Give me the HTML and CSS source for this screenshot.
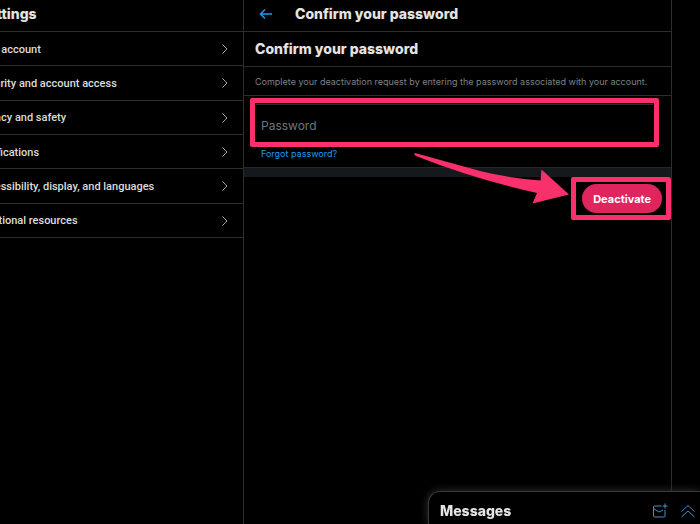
FILE: index.html
```html
<!DOCTYPE html>
<html lang="en">
<head>
<meta charset="utf-8">
<title>Confirm your password</title>
<link rel="stylesheet" href="styles.css">
</head>
<body>
<div class="app">
  <aside class="sidebar">
    <h2 class="bar">Settings</h2>
    <nav class="menu">
      <a href="#">Your account<svg viewBox="0 0 8 12"><path d="M1.5 1.5 6 6 1.5 10.500"/></svg></a>
      <a href="#">Security and account access<svg viewBox="0 0 8 12"><path d="M1.5 1.5 6 6 1.5 10.500"/></svg></a>
      <a href="#">Privacy and safety<svg viewBox="0 0 8 12"><path d="M1.5 1.5 6 6 1.5 10.500"/></svg></a>
      <a href="#">Notifications<svg viewBox="0 0 8 12"><path d="M1.5 1.5 6 6 1.5 10.500"/></svg></a>
      <a href="#">Accessibility, display, and languages<svg viewBox="0 0 8 12"><path d="M1.5 1.5 6 6 1.5 10.500"/></svg></a>
      <a href="#">Additional resources<svg viewBox="0 0 8 12"><path d="M1.5 1.5 6 6 1.5 10.500"/></svg></a>
    </nav>
  </aside>
  <main class="content">
    <header class="bar top">
      <a class="back" href="#" aria-label="Back"><svg viewBox="0 0 14 12"><path d="M6 1.500 1.500 6 6 10.500M1.500 6H13"/></svg></a>
      <h1>Confirm your password</h1>
    </header>
    <h2 class="section-title">Confirm your password</h2>
    <p class="note">Complete your deactivation request by entering the password associated with your account.</p>
    <form>
      <div class="field">
        <input type="password" placeholder="Password" aria-label="Password">
        <div class="mark"></div>
      </div>
      <a class="forgot" href="#">Forgot password?</a>
      <div class="band"></div>
      <div class="actions">
        <div class="confirm">
          <button type="button">Deactivate</button>
          <div class="mark"></div>
        </div>
      </div>
    </form>
    <svg class="arrow" viewBox="0 0 156 52"><path d="M1 1Q-.5 2.500 2 4Q60 27 123 41L118.500 51.500 155 42.500 127.500 17.500 126.500 28.500Q95 26 68 19.500Z"/></svg>
  </main>
</div>
<section class="messages">
  <h2>Messages</h2>
  <button type="button" aria-label="New message"><svg width="16" height="16" viewBox="0 0 16 16"><path d="M9.500 3H2.500Q1.500 3 1.500 4V13Q1.500 14 2.500 14H12Q13 14 13 13V7M1.500 5.500 7 9 11 7M13 .5V5.500M10.500 3H15.500"/></svg></button>
  <button type="button" aria-label="Expand"><svg width="16" height="16" viewBox="0 0 16 16"><path d="M1.500 8.500 8 2.500 14.500 8.500M1.500 14 8 8 14.500 14"/></svg></button>
</section>
</body>
</html>
```
FILE: styles.css
```css
* { box-sizing: border-box; }
body {
  margin: 0;
  background: #000;
  color: #e4e4e4;
  font-family: Inter, "Liberation Sans", sans-serif;
  font-size: 9px;
  overflow: hidden;
}
h1, h2, p { margin: 0; }
h1, h2 { font-size: 14px; line-height: 20px; font-weight: 800; }
a { text-decoration: none; }
svg { fill: none; stroke: currentColor; display: block; }
.app {
  display: grid;
  grid-template-columns: 243px minmax(0, 1fr);
  padding-right: 28px;
  min-height: 100vh;
}
.sidebar { margin-left: -24px; }
.bar {
  height: 32px;
  padding: 4px 0 8px 3px;
  border-bottom: 1px solid #2b2d2f;
}
.menu { display: grid; grid-auto-rows: 1fr; height: 206px; }
.menu a {
  display: flex;
  align-items: center;
  justify-content: space-between;
  padding: 1px 14px 0 0;
  color: #dcdcdc;
  font: 500 11px Roboto, sans-serif;
  border-bottom: 1px solid #2b2d2f;
}
.menu svg { width: 8px; height: 12px; color: #a0a3a6; }
.content {
  position: relative;
  border: 1px solid #2b2d2f;
  border-width: 0 1px;
}
.top { display: flex; align-items: center; gap: 22px; padding-left: 15px; }
.back { color: #1d9bf0; }
.back svg { width: 14px; height: 12px; stroke-width: 1.500; }
.section-title {
  padding: 7px 11px;
  border-bottom: 1px solid #2b2d2f;
}
.note {
  padding: 7px 11px 6px;
  line-height: 15px;
  color: #7c8288;
  border-bottom: 1px solid #2b2d2f;
}
.field { position: relative; margin: 2px 12px 0 6px; padding: 6px; }
.field input {
  display: block;
  width: 100%;
  height: 37px;
  padding: 4px 5px 0;
  border: 0;
  border-top: 1px solid #2b2d2f;
  background: transparent;
  color: #e4e4e4;
  font: 12px Inter, sans-serif;
  outline: 0;
}
.field input::placeholder { color: #71767b; opacity: 1; }
.mark {
  position: absolute;
  inset: 0;
  border: 5px solid #f9306b;
  border-radius: 2px;
  pointer-events: none;
}
.forgot {
  display: block;
  padding: 0 17px 6px;
  line-height: 14px;
  color: #1d9bf0;
}
.band { height: 10px; background: #15181c; border-top: 1px solid #25282b; }
.actions { display: flex; justify-content: flex-end; }
.confirm { position: relative; padding: 7px 9px 7px 11px; }
.confirm button {
  display: block;
  height: 29px;
  padding: 0 11px;
  border: 0;
  border-radius: 15px;
  background: #e0245e;
  color: #fff;
  font: 700 11px Inter, sans-serif;
}
.arrow {
  position: absolute;
  left: 170px;
  top: 152px;
  width: 156px;
  height: 52px;
  fill: #f9306b;
  stroke: none;
}
.messages {
  position: fixed;
  right: 0;
  bottom: 0;
  width: 272px;
  height: 33px;
  display: flex;
  align-items: center;
  gap: 12px;
  padding: 6px 4px 0 11px;
  background: #000;
  border: 1px solid #38393a;
  border-width: 1px 0 0 1px;
  border-radius: 12px 0 0 0;
  box-shadow: 0 0 9px #333;
}
.messages h2 { flex: 1; }
.messages button { padding: 0; border: 0; background: none; color: #468fc4; }
```
